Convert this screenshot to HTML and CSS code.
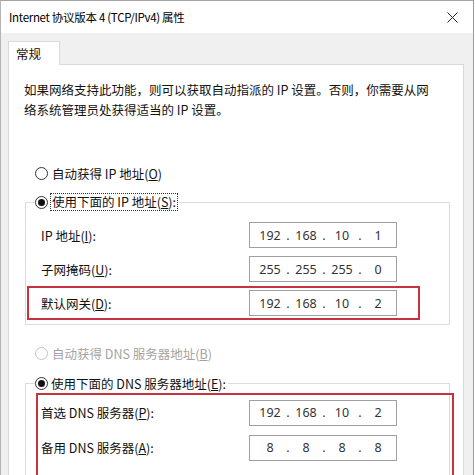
FILE: index.html
```html
<!DOCTYPE html>
<html lang="zh-CN">
<head>
<meta charset="utf-8">
<link rel="stylesheet" href="styles.css">
</head>
<body>
<div class="window">
  <div class="titlebar">
    <span class="title">Internet 协议版本 4 (TCP/IPv4) 属性</span>
    <svg class="close" width="11" height="11" viewBox="0 0 11 11"><path d="M0.5 0.5 L10.5 10.5 M10.5 0.5 L0.5 10.5" stroke="#222" stroke-width="1" fill="none"/></svg>
  </div>
  <div class="body">
    <div class="tabs"><div class="tab">常规</div></div>
    <div class="panel">
      <p class="desc">如果网络支持此功能，则可以获取自动指派的 IP 设置。否则，你需要从网<br>络系统管理员处获得适当的 IP 设置。</p>
      <div class="option first"><span class="radio"></span><span>自动获得 IP 地址(<u>O</u>)</span></div>
      <div class="group">
        <div class="legend"><span class="radio checked"></span><span class="focus">使用下面的 IP 地址(<u>S</u>):</span></div>
        <div class="rows">
          <div class="row"><span class="label">IP 地址(<u>I</u>):</span>
            <div class="ip"><span class="oct">192</span><span class="dot">.</span><span class="oct">168</span><span class="dot">.</span><span class="oct">10</span><span class="dot">.</span><span class="oct">1</span></div></div>
          <div class="row"><span class="label">子网掩码(<u>U</u>):</span>
            <div class="ip"><span class="oct">255</span><span class="dot">.</span><span class="oct">255</span><span class="dot">.</span><span class="oct">255</span><span class="dot">.</span><span class="oct">0</span></div></div>
          <div class="row hl"><span class="label">默认网关(<u>D</u>):</span>
            <div class="ip"><span class="oct">192</span><span class="dot">.</span><span class="oct">168</span><span class="dot">.</span><span class="oct">10</span><span class="dot">.</span><span class="oct">2</span></div></div>
        </div>
      </div>
      <div class="option dis"><span class="radio"></span><span>自动获得 DNS 服务器地址(<u>B</u>)</span></div>
      <div class="group g2">
        <div class="legend"><span class="radio checked"></span><span>使用下面的 DNS 服务器地址(<u>E</u>):</span></div>
        <div class="hlbox">
          <div class="row2"><span class="label">首选 DNS 服务器(<u>P</u>):</span>
            <div class="ip"><span class="oct">192</span><span class="dot">.</span><span class="oct">168</span><span class="dot">.</span><span class="oct">10</span><span class="dot">.</span><span class="oct">2</span></div></div>
          <div class="row2"><span class="label">备用 DNS 服务器(<u>A</u>):</span>
            <div class="ip"><span class="oct">8</span><span class="dot">.</span><span class="oct">8</span><span class="dot">.</span><span class="oct">8</span><span class="dot">.</span><span class="oct">8</span></div></div>
        </div>
      </div>
    </div>
  </div>
</div>
</body>
</html>
```
FILE: styles.css
```css
body {
  margin: 0;
  background: #fff;
  font-family: "Noto Sans CJK SC", "Noto Sans", sans-serif;
  color: #111;
}
.window {
  width: 474px;
  height: 475px;
  box-sizing: border-box;
  border-left: 1px solid #b4b4b4;
  border-top: 1px solid #a6a6a6;
  border-right: 1px solid #9a9a9a;
  background: #f0f0f0;
  overflow: hidden;
  display: flex;
  flex-direction: column;
}
.titlebar {
  flex: none;
  height: 32px;
  background: #fff;
  display: flex;
  align-items: center;
  justify-content: space-between;
  padding: 0 15px 0 8px;
}
.title {
  font-size: 11.5px;
  letter-spacing: -0.3px;
  color: #000;
}
.close { display: block; }
.body {
  padding: 8px 0 0 7px;
}
.tabs { display: flex; }
.tab {
  width: 52px;
  height: 24px;
  box-sizing: border-box;
  background: #fff;
  border: 1px solid #d9d9d9;
  border-bottom: none;
  font-size: 12.5px;
  padding-left: 7px;
  display: flex;
  align-items: center;
  position: relative;
  z-index: 1;
  margin-bottom: -1px;
}
.panel {
  width: 456px;
  height: 430px;
  box-sizing: border-box;
  background: #fff;
  border: 1px solid #d9d9d9;
  padding: 15px 13px 0 16px;
}
.desc {
  margin: 0 0 0 -1px;
  font-size: 12.5px;
  line-height: 20px;
  white-space: nowrap;
  color: #111;
}
u { text-underline-offset: 1px; }
.option {
  display: flex;
  align-items: center;
  gap: 4px;
  height: 28px;
  padding-left: 10px;
  font-size: 12.5px;
}
.option.first { margin-top: 39px; }
.option.dis { margin-top: 14px; color: #a3a3a3; }
.option.dis .radio { border-color: #c4c4c4; }
.radio {
  width: 13px;
  height: 13px;
  box-sizing: border-box;
  border: 1px solid #333;
  border-radius: 50%;
  background: #fff;
  display: flex;
  align-items: center;
  justify-content: center;
  flex: none;
}
.radio.checked::after {
  content: "";
  width: 7px;
  height: 7px;
  border-radius: 50%;
  background: #111;
}
.group {
  border: 1px solid #dcdcdc;
  margin-top: 15px;
}
.group.g2 { margin-top: 16px; }
.legend {
  margin: -11px 0 0 9px;
  width: max-content;
  height: 20px;
  background: #fff;
  display: flex;
  align-items: center;
  gap: 3px;
  font-size: 12.5px;
  padding-right: 2px;
}
.focus {
  outline: 1px dotted #333;
  padding: 0 1px;
  line-height: 16px;
}
.rows {
  margin-top: 6px;
  padding-bottom: 4px;
}
.row {
  width: 393px;
  height: 34px;
  box-sizing: border-box;
  border: 2px solid transparent;
  margin-left: 1px;
  padding-left: 12px;
  display: flex;
  align-items: center;
}
.row.hl { border-color: #c6323d; }
.label {
  width: 208px;
  flex: none;
  font-size: 12.5px;
}
.hlbox {
  margin-left: 10px;
  width: 418px;
  height: 120px;
  box-sizing: border-box;
  border: 2px solid #c6323d;
}
.row2 {
  height: 35px;
  padding-left: 3px;
  display: flex;
  align-items: center;
}
.ip {
  width: 148px;
  height: 26px;
  box-sizing: border-box;
  border: 1px solid #a0a0a0;
  background: #fff;
  padding-left: 6px;
  display: flex;
  align-items: center;
  font-family: "Noto Sans", sans-serif;
  font-size: 12.5px;
  color: #333;
}
.oct { width: 28px; text-align: center; }
.dot { width: 8px; text-align: center; }
```
